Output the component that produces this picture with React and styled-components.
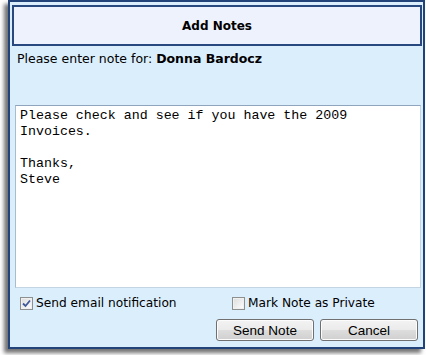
import React from "react";
import styled, { createGlobalStyle } from "styled-components";

const GlobalStyle = createGlobalStyle`
  html, body {
    margin: 0;
    padding: 0;
    background: #ffffff;
  }
  body {
    font-family: "DejaVu Sans", Verdana, sans-serif;
  }
`;

const Page = styled.div`
  width: 426px;
  height: 355px;
  padding-left: 8px;
  box-sizing: border-box;
`;

const Dialog = styled.div`
  width: 417px;
  height: 349px;
  box-sizing: border-box;
  border: 2px solid #22427a;
  background: #dbeefc;
  box-shadow: -4px 4px 4px rgba(0, 0, 0, 0.55);
  display: flex;
  flex-direction: column;
`;

const Header = styled.div`
  margin: 3px 1px 0 2px;
  height: 41px;
  box-sizing: border-box;
  border: 2px solid #27497f;
  background: #eef2fc;
  display: flex;
  align-items: center;
  justify-content: center;
  font-size: 12px;
  font-weight: bold;
  color: #000;
`;

const Prompt = styled.div`
  margin-top: 5px;
  padding-left: 7px;
  height: 16px;
  line-height: 16px;
  font-size: 12.5px;
  color: #000;

  b {
    font-weight: bold;
  }
`;

const NoteArea = styled.textarea`
  margin: 38px 2px 0 5px;
  height: 183px;
  box-sizing: border-box;
  padding: 2px 4px;
  border: 1px solid;
  border-color: #8fa4bd #c3d4e3 #c3d4e3 #a9bccf;
  background: #fff;
  font-family: "Liberation Mono", "Courier New", monospace;
  font-size: 13.3px;
  line-height: 16px;
  color: #000;
  resize: none;
  outline: none;
`;

const Options = styled.div`
  margin-top: 7px;
  padding-left: 10px;
  height: 16px;
  display: grid;
  grid-template-columns: 212px auto;
  align-items: center;
`;

const Option = styled.label`
  display: flex;
  align-items: center;
  gap: 3px;
  font-size: 12.2px;
  color: #000;
`;

const Box = styled.span`
  width: 13px;
  height: 13px;
  box-sizing: border-box;
  border: 1px solid #8e8f8f;
  background: linear-gradient(135deg, #dcdcdc 0%, #f4f4f4 70%, #ffffff 100%);
  box-shadow: inset 0 0 0 1px #f0f0f0;
  display: flex;
  align-items: center;
  justify-content: center;
`;

const Buttons = styled.div`
  margin-top: 8px;
  padding-right: 5px;
  display: flex;
  justify-content: flex-end;
  gap: 6px;
`;

const Button = styled.button`
  width: 98px;
  height: 22px;
  box-sizing: border-box;
  border: 1px solid #707070;
  border-radius: 3px;
  background: linear-gradient(#f3f3f3 0%, #ebebeb 48%, #dddddd 52%, #cfcfcf 100%);
  box-shadow: inset 0 0 0 1px #fcfcfc;
  font-family: "Liberation Sans", Arial, sans-serif;
  font-size: 13.5px;
  color: #000;
  padding: 0;
`;

const Checkbox = ({ checked }) => (
  <Box>
    {checked && (
      <svg width="9" height="9" viewBox="0 0 9 9">
        <path d="M1 4.5 L3.5 7 L8 1.5" fill="none" stroke="#3f5899" strokeWidth="1.8" />
      </svg>
    )}
  </Box>
);

export default function App() {
  return (
    <>
      <GlobalStyle />
      <Page>
        <Dialog>
          <Header>Add Notes</Header>
          <Prompt>
            Please enter note for: <b>Donna Bardocz</b>
          </Prompt>
          <NoteArea
            defaultValue={"Please check and see if you have the 2009\nInvoices.\n\nThanks,\nSteve"}
          />
          <Options>
            <Option>
              <Checkbox checked />
              Send email notification
            </Option>
            <Option>
              <Checkbox />
              Mark Note as Private
            </Option>
          </Options>
          <Buttons>
            <Button>Send Note</Button>
            <Button>Cancel</Button>
          </Buttons>
        </Dialog>
      </Page>
    </>
  );
}
